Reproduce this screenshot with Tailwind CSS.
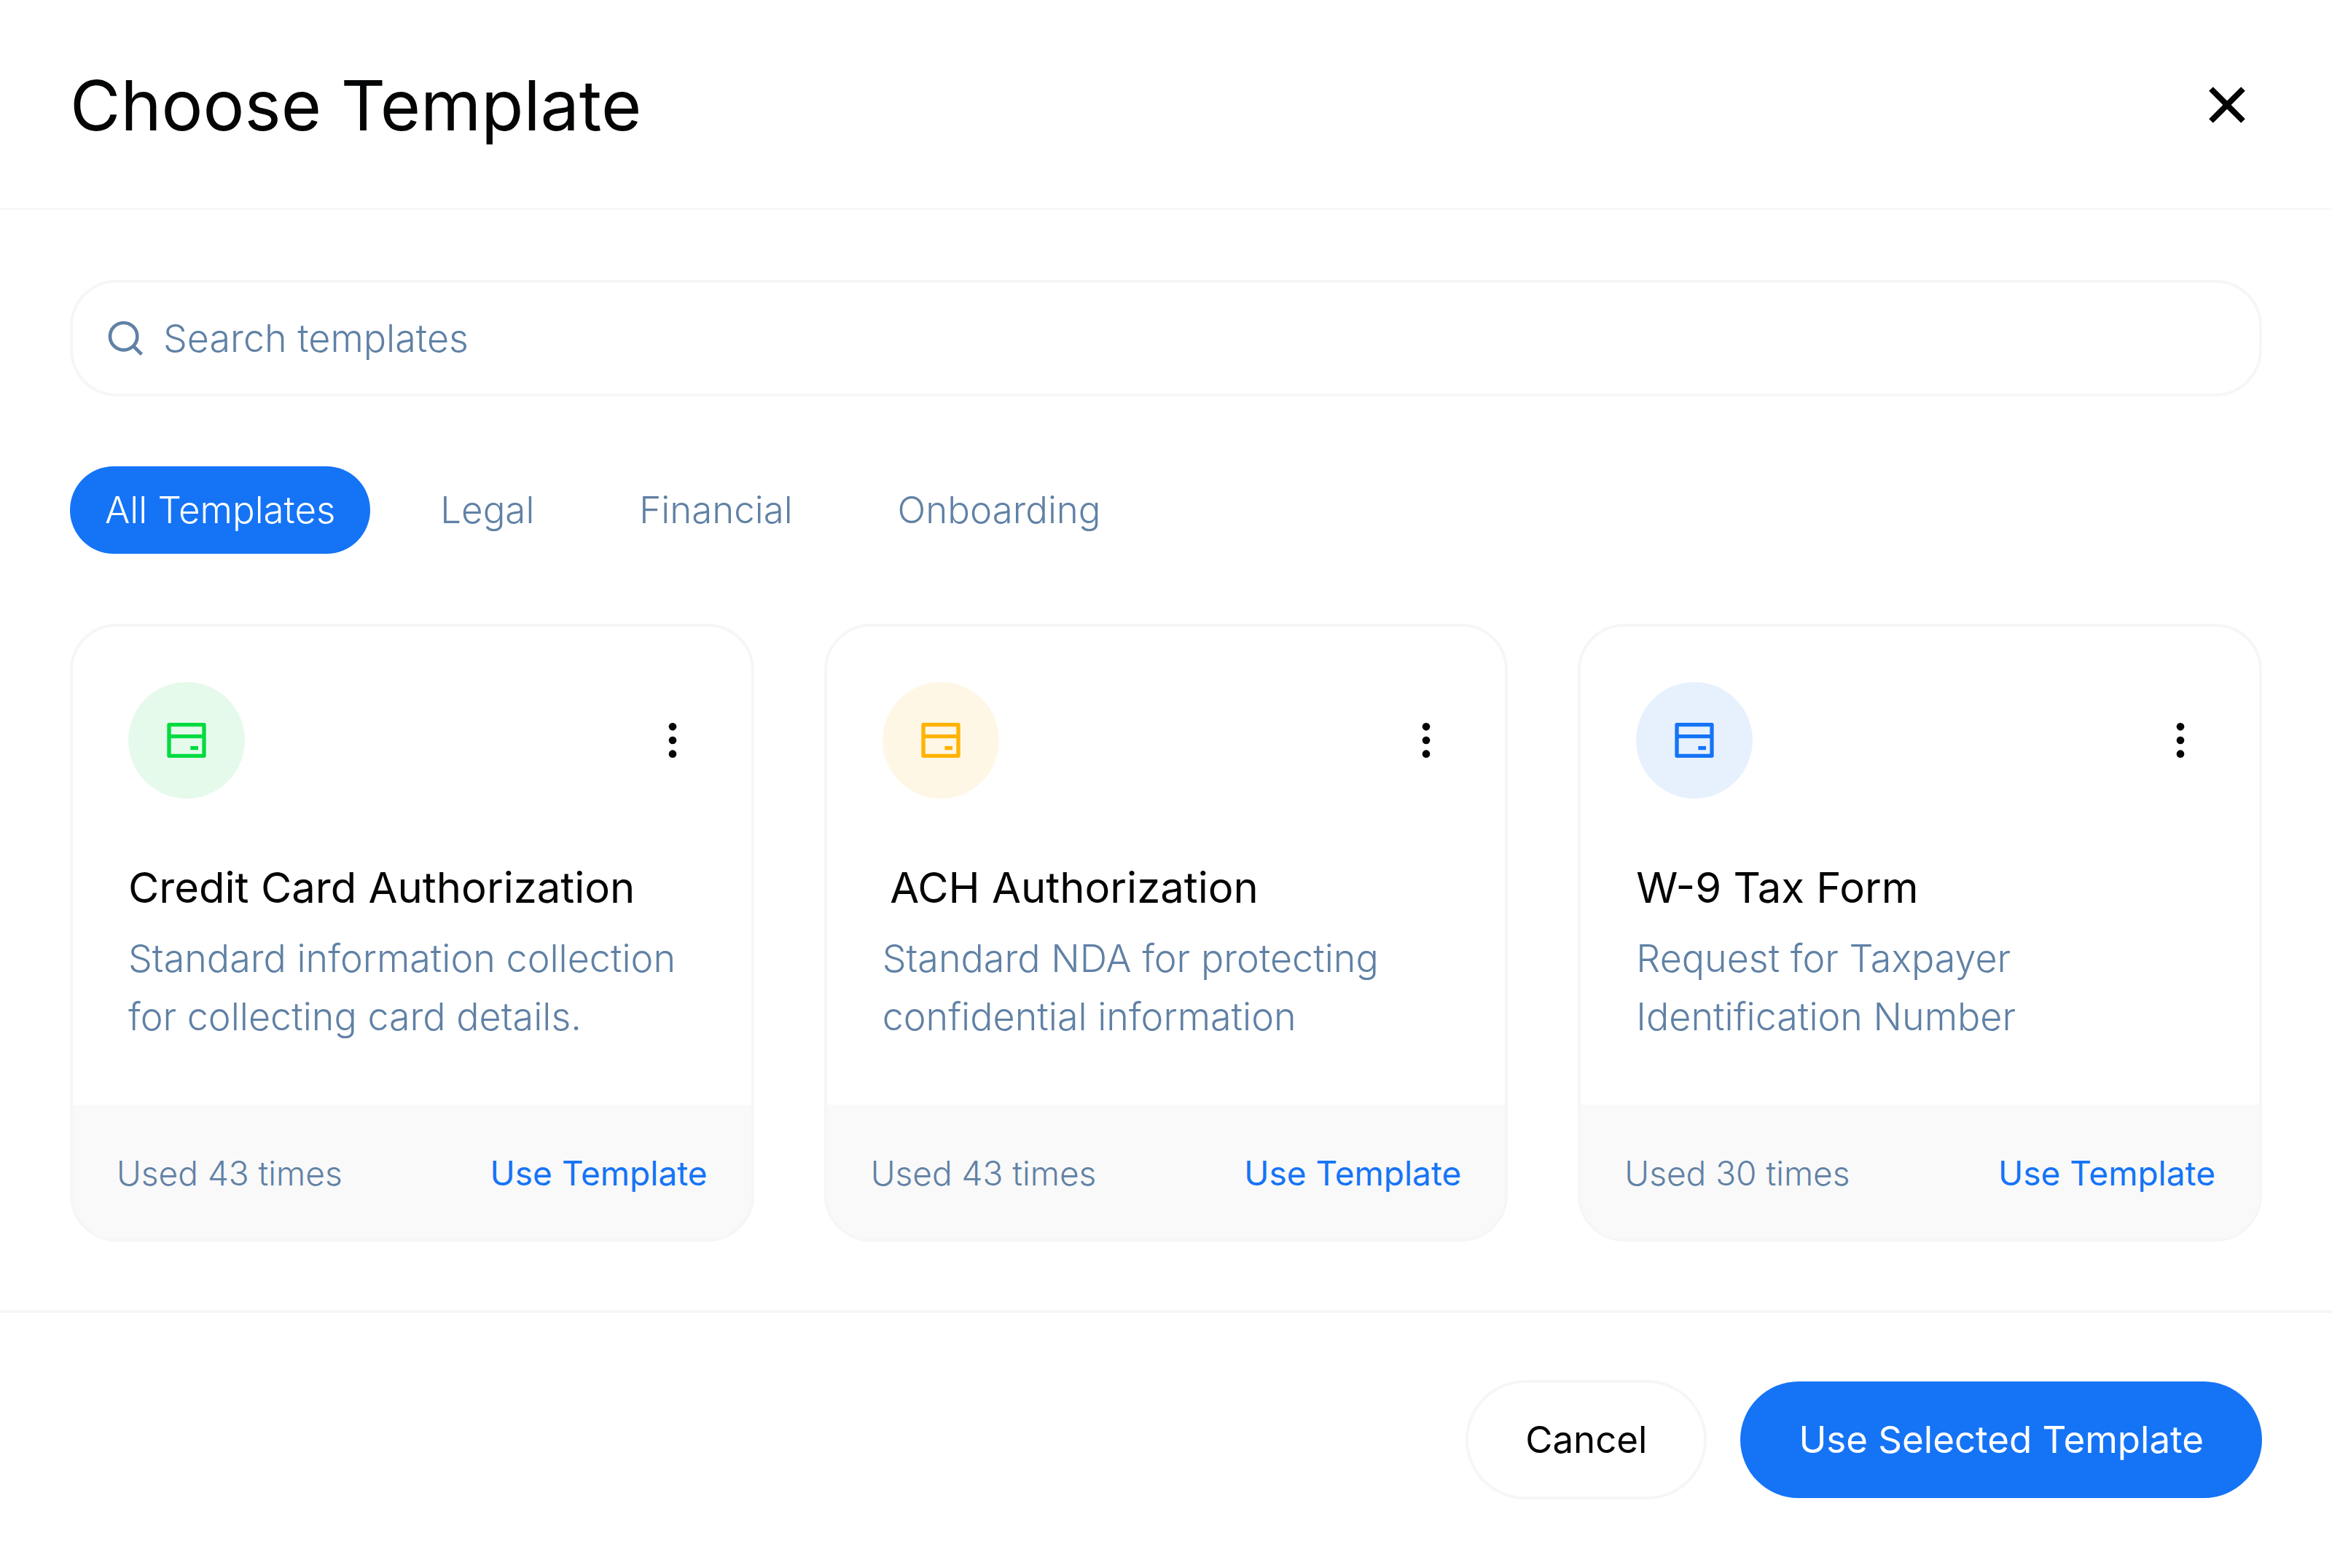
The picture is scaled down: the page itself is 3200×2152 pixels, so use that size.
<!DOCTYPE html>
<html lang="en">
<head>
<meta charset="utf-8">
<meta name="viewport" content="width=device-width, initial-scale=1">
<title>Choose Template</title>
<script src="https://cdn.jsdelivr.net/npm/@tailwindcss/browser@4"></script>
</head>
<body class="bg-white font-['Inter',sans-serif] text-[51px] leading-[80px] font-normal text-[#040506]">
<svg class="hidden" aria-hidden="true">
  <symbol id="card" viewBox="0 0 24 24"><path fill="currentColor" d="M3 3h18a1 1 0 0 1 1 1v16a1 1 0 0 1-1 1H3a1 1 0 0 1-1-1V4a1 1 0 0 1 1-1zm17 8H4v8h16v-8zm0-2V5H4v4h16zm-6 6h4v2h-4v-2z"/></symbol>
  <symbol id="more" viewBox="0 0 24 24"><g fill="currentColor"><circle cx="12" cy="5" r="2"/><circle cx="12" cy="12" r="2"/><circle cx="12" cy="19" r="2"/></g></symbol>
</svg>

<div role="dialog" aria-labelledby="title" class="flex min-h-screen flex-col">
  <header class="flex items-center justify-between border-b-2 border-[#f6f6f6] px-24 py-[75px]">
    <h1 id="title" class="pt-1 text-[95px] leading-[132px]">Choose Template</h1>
    <button type="button" aria-label="Close">
      <svg class="size-24" viewBox="0 0 96 96" fill="none" stroke="currentColor" stroke-width="8"><path d="M26 27l44 44M70 27L26 71"/></svg>
    </button>
  </header>

  <main class="flex flex-col gap-24 px-24 pt-24 pb-[94px]">
    <label class="flex h-40 items-center gap-6 rounded-[64px] border-4 border-[#f6f6f6] px-11 text-[52px] font-light text-[#6081a5]">
      <svg class="size-14 shrink-0" viewBox="0 0 24 24" fill="none" stroke="currentColor" stroke-width="2" aria-hidden="true"><circle cx="11" cy="11" r="8"/><path d="M16.6 16.6l5 5"/></svg>
      <input type="search" aria-label="Search templates" placeholder="Search templates" class="h-full min-w-0 grow bg-transparent outline-none placeholder:text-[#6081a5] placeholder:opacity-100">
    </label>

    <nav aria-label="Categories" class="flex gap-12 font-light text-[#6081a5]">
      <button type="button" aria-pressed="true" class="h-30 rounded-full bg-[#1574f6] px-12 text-white">All Templates</button>
      <button type="button" class="h-30 rounded-full px-12">Legal</button>
      <button type="button" class="h-30 rounded-full px-12">Financial</button>
      <button type="button" class="h-30 rounded-full px-12">Onboarding</button>
    </nav>

    <section aria-label="Templates" class="grid grid-cols-3 gap-24">
      <article class="flex flex-col overflow-hidden rounded-[64px] border-4 border-[#f6f6f6]">
        <div class="grow px-[76px] pt-[76px] pb-20">
          <div class="flex items-center justify-between">
            <span class="flex size-40 items-center justify-center rounded-full bg-[#e5faeb] text-[#00db40]"><svg class="size-16" aria-hidden="true"><use href="#card"/></svg></span>
            <button type="button" aria-label="More options"><svg class="size-16"><use href="#more"/></svg></button>
          </div>
          <h2 class="mt-20 mb-4 text-[58px] leading-[84px]">Credit Card Authorization</h2>
          <p class="text-[52px] font-light text-[#6081a5]">Standard information collection<br>for collecting card details.</p>
        </div>
        <footer class="flex items-center justify-between bg-[#f9f9f9] px-[60px] pt-[58px] pb-[54px] text-[46px] leading-[72px]">
          <span class="font-light text-[#6081a5]">Used 43 times</span>
          <a href="#" class="text-[#1574f6]">Use Template</a>
        </footer>
      </article>

      <article class="flex flex-col overflow-hidden rounded-[64px] border-4 border-[#f6f6f6]">
        <div class="grow px-[76px] pt-[76px] pb-20">
          <div class="flex items-center justify-between">
            <span class="flex size-40 items-center justify-center rounded-full bg-[#fff7e5] text-[#ffb300]"><svg class="size-16" aria-hidden="true"><use href="#card"/></svg></span>
            <button type="button" aria-label="More options"><svg class="size-16"><use href="#more"/></svg></button>
          </div>
          <h2 class="mt-20 mb-4 text-[58px] leading-[84px]">&thinsp;ACH Authorization</h2>
          <p class="text-[52px] font-light text-[#6081a5]">Standard NDA for protecting<br>confidential information</p>
        </div>
        <footer class="flex items-center justify-between bg-[#f9f9f9] px-[60px] pt-[58px] pb-[54px] text-[46px] leading-[72px]">
          <span class="font-light text-[#6081a5]">Used 43 times</span>
          <a href="#" class="text-[#1574f6]">Use Template</a>
        </footer>
      </article>

      <article class="flex flex-col overflow-hidden rounded-[64px] border-4 border-[#f6f6f6]">
        <div class="grow px-[76px] pt-[76px] pb-20">
          <div class="flex items-center justify-between">
            <span class="flex size-40 items-center justify-center rounded-full bg-[#e7f1fe] text-[#1574f6]"><svg class="size-16" aria-hidden="true"><use href="#card"/></svg></span>
            <button type="button" aria-label="More options"><svg class="size-16"><use href="#more"/></svg></button>
          </div>
          <h2 class="mt-20 mb-4 text-[58px] leading-[84px]">W-9 Tax Form</h2>
          <p class="text-[52px] font-light text-[#6081a5]">Request for Taxpayer<br>Identification Number</p>
        </div>
        <footer class="flex items-center justify-between bg-[#f9f9f9] px-[60px] pt-[58px] pb-[54px] text-[46px] leading-[72px]">
          <span class="font-light text-[#6081a5]">Used 30 times</span>
          <a href="#" class="text-[#1574f6]">Use Template</a>
        </footer>
      </article>
    </section>
  </main>

  <footer class="flex justify-end gap-12 border-t-4 border-[#f6f6f6] px-24 pt-[94px] pb-24">
    <button type="button" class="h-40 rounded-full px-20 outline-4 -outline-offset-2 outline-[#f6f6f6]">Cancel</button>
    <button type="button" class="h-40 rounded-full bg-[#1574f6] px-20 text-white">Use Selected Template</button>
  </footer>
</div>
</body>
</html>
